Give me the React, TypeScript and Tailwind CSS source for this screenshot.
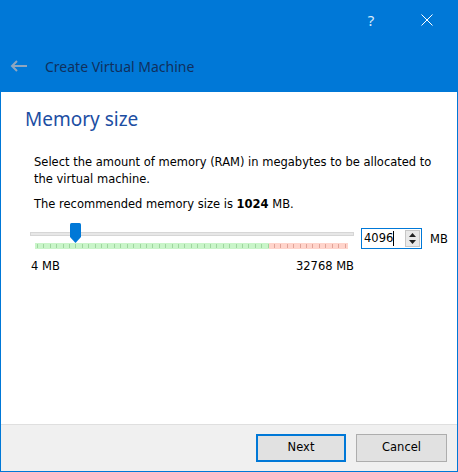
const ticks = Array.from({ length: 49 }, (_, i) => i)

function Slider() {
  return (
    <div className="relative w-[324px] h-[30px]">
      {/* track */}
      <div className="absolute left-0 right-0 top-[9px] h-[4px] bg-[#e7e7e7] border border-[#d6d6d6]" />
      {/* thumb */}
      <svg className="absolute left-[40px] top-0" width="11" height="21" viewBox="0 0 11 21">
        <path d="M0 1.5 Q0 0 1.5 0 H9.5 Q11 0 11 1.5 V14 L5.5 20 L0 14 Z" fill="#0078d7" />
      </svg>
      {/* tick band */}
      <div className="absolute left-[5px] top-[20px] w-[313px] h-[6px] flex">
        <div className="w-[234px] h-full bg-[#c9f5c9]" />
        <div className="flex-1 h-full bg-[#ffd4cb]" />
        <div className="absolute inset-0 flex justify-between items-center px-[2px]">
          {ticks.map((i) => (
            <div
              key={i}
              className={i * 6.4 < 232 ? 'w-px h-[4px] bg-[#9fd69f]' : 'w-px h-[4px] bg-[#e0a398]'}
            />
          ))}
        </div>
      </div>
    </div>
  )
}

export default function App() {
  return (
    <div
      className="w-[458px] h-[472px] flex flex-col bg-[#0078d7] px-px pb-px"
      style={{ fontFamily: '"DejaVu Sans", sans-serif' }}
    >
      {/* title bar */}
      <div className="h-[92px] flex flex-col">
        <div className="h-[40px] flex justify-end items-center text-white">
          <span
            className="w-[10px] text-center text-[15px] text-[#d9ebfa]"
            style={{ fontFamily: '"Noto Sans", sans-serif' }}
          >
            ?
          </span>
          <svg className="ml-[45px] mr-[24px]" width="12" height="12" viewBox="0 0 12 12">
            <path d="M0.5 0.5 L11.5 11.5 M11.5 0.5 L0.5 11.5" stroke="#ffffff" strokeWidth="1" />
          </svg>
        </div>
        <div className="flex items-center h-[52px]">
          <svg className="ml-[9px] mr-[17px]" width="18" height="12" viewBox="0 0 18 12">
            <path d="M7 1 L2 6 L7 11 M2 6 H17" stroke="#8fa6bf" strokeWidth="2" fill="none" />
          </svg>
          <span
            className="text-[14px] text-[#10305e]"
            style={{ fontFamily: '"Noto Sans", sans-serif' }}
          >
            Create Virtual Machine
          </span>
        </div>
      </div>

      {/* content */}
      <div className="flex-1 bg-white flex flex-col">
        <h2
          className="ml-[24px] mt-[13px] text-[19px] text-[#1c4ea3] leading-[28px]"
          style={{ fontFamily: '"Noto Sans", sans-serif' }}
        >
          Memory size
        </h2>
        <div className="ml-[33px] mt-[21px] text-[11.5px] leading-[17px] text-black w-[400px]">
          Select the amount of memory (RAM) in megabytes to be allocated to the virtual machine.
        </div>
        <div className="ml-[33px] mt-[8px] text-[11.5px] leading-[17px] text-black">
          The recommended memory size is <b>1024</b> MB.
        </div>

        <div className="flex mt-[10px] ml-[29px]">
          <div className="flex flex-col">
            <Slider />
            <div className="flex justify-between w-[324px] text-[11.5px] leading-[17px] mt-[5px]">
              <span className="ml-px">4 MB</span>
              <span>32768 MB</span>
            </div>
          </div>
          <div className="ml-[7px] mt-[5px] w-[61px] h-[21px] border border-[#0078d7] flex items-center">
            <span className="ml-[2px] text-[11.5px] text-black">4096</span>
            <span className="w-px h-[15px] bg-black" />
            <div className="ml-auto mr-px flex flex-col items-center justify-center gap-[3px] w-[15px] h-[17px] bg-[#e9e9e9] border border-[#c7c7c7]">
              <svg width="7" height="4" viewBox="0 0 7 4">
                <path d="M0 4 L3.5 0 L7 4 Z" fill="#222" />
              </svg>
              <svg width="7" height="4" viewBox="0 0 7 4">
                <path d="M0 0 L3.5 4 L7 0 Z" fill="#222" />
              </svg>
            </div>
          </div>
          <span className="ml-[8px] mt-[8px] text-[11.5px] leading-[17px] text-black">MB</span>
        </div>
      </div>

      {/* footer */}
      <div className="h-[47px] bg-[#f0f0f0] border-t border-[#dfdfdf] flex items-center justify-end pr-[10px] gap-[10px] text-[11.5px]">
        <button className="w-[90px] h-[28px] bg-[#e1e1e1] border-2 border-[#0078d7] text-black">
          Next
        </button>
        <button className="w-[91px] h-[28px] bg-[#e1e1e1] border border-[#adadad] text-black">
          Cancel
        </button>
      </div>
    </div>
  )
}
